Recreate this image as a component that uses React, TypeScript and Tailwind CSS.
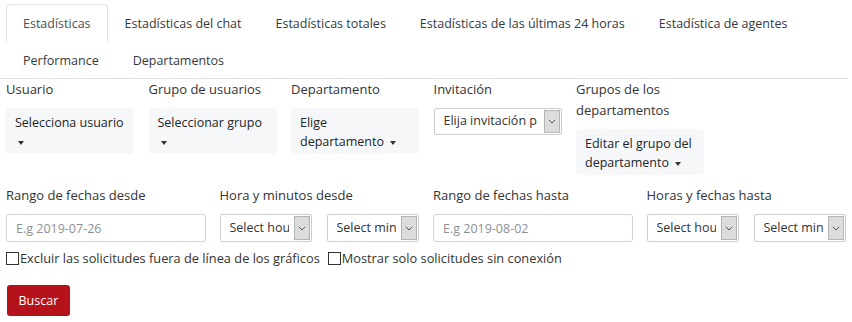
import React from "react";

const tabsRow = [
  "Estadísticas",
  "Estadísticas del chat",
  "Estadísticas totales",
  "Estadísticas de las últimas 24 horas",
  "Estadística de agentes",
  "Performance",
  "Departamentos",
];

function Caret() {
  return (
    <span className="inline-block ml-[3px] align-middle w-0 h-0 border-l-[3.5px] border-r-[3.5px] border-t-[4px] border-l-transparent border-r-transparent border-t-[#333]" />
  );
}

function DropBtn({ text }: { text: string }) {
  return (
    <div className="w-[128px] bg-[#f6f7f9] rounded-[3px] px-[9px] pt-[5px] pb-[3px] text-[12.5px] leading-[19px] text-[#212529]">
      {text} <Caret />
    </div>
  );
}

function Chevron() {
  return (
    <svg width="8" height="5" viewBox="0 0 8 5" fill="none">
      <path d="M0.8 0.8 L4 4 L7.2 0.8" stroke="#555" strokeWidth="1" />
    </svg>
  );
}

function FakeSelect({ text, w, h }: { text: string; w: string; h: string }) {
  return (
    <div className={`${w} ${h} border border-[#cdcdcd] bg-white rounded-[2px] flex items-stretch p-px`}>
      <span className="flex-1 min-w-0 pl-[8px] pr-[5px] flex items-center">
        <span className="block w-full overflow-hidden whitespace-nowrap text-[12.5px] text-[#333]">{text}</span>
      </span>
      <span className="w-[16px] bg-[#dcdcdc] border border-[#b4b4b4] flex items-center justify-center">
        <Chevron />
      </span>
    </div>
  );
}

function Label({ children }: { children: React.ReactNode }) {
  return <div className="text-[13px] leading-[21px] text-[#333] mb-[8px]">{children}</div>;
}

export default function App() {
  return (
    <div className="w-[852px] h-[322px] bg-white font-['Open_Sans',sans-serif] text-[#333] overflow-hidden">
      {/* Tabs */}
      <div className="w-[848px] border-b border-[#dee2e6] pt-[4px] pl-[6px]">
        <ul className="flex flex-wrap">
          {tabsRow.map((t, i) => (
            <li
              key={t}
              className={
                i === 0
                  ? "px-[16px] pt-[9px] pb-[7px] text-[12.5px] leading-[19px] text-[#495057] border border-[#dee2e6] border-b-white rounded-t-[4px] bg-white -mb-px"
                  : "px-[16px] pt-[9px] pb-[7px] text-[12.5px] leading-[19px] text-[#343a40] border border-transparent"
              }
            >
              {t}
            </li>
          ))}
        </ul>
      </div>

      {/* Row 1 */}
      <div className="grid grid-cols-6 w-[855px]">
        <div className="px-[6px]">
          <Label>Usuario</Label>
          <DropBtn text="Selecciona usuario" />
        </div>
        <div className="px-[6px]">
          <Label>Grupo de usuarios</Label>
          <DropBtn text="Seleccionar grupo" />
        </div>
        <div className="px-[6px]">
          <Label>Departamento</Label>
          <DropBtn text="Elige departamento" />
        </div>
        <div className="px-[6px]">
          <Label>Invitación</Label>
          <FakeSelect text="Elija invitación p" w="w-[128px]" h="h-[27px]" />
        </div>
        <div className="px-[6px]">
          <Label>
            Grupos de los
            <br />
            departamentos
          </Label>
          <DropBtn text="Editar el grupo del departamento" />
        </div>
        <div />
      </div>

      {/* Row 2 */}
      <div className="grid grid-cols-4 w-[854px] mt-[10px]">
        <div className="px-[6px]">
          <Label>Rango de fechas desde</Label>
          <input
            readOnly
            placeholder="E.g 2019-07-26"
            className="w-[200px] h-[28px] border border-[#ced4da] rounded-[3px] px-[9px] text-[12.5px] placeholder:text-[#8c9196] outline-none"
          />
        </div>
        <div className="px-[6px]">
          <Label>Hora y minutos desde</Label>
          <div className="flex gap-[15px]">
            <FakeSelect text="Select hour" w="w-[92px]" h="h-[28px]" />
            <FakeSelect text="Select minute" w="w-[92px]" h="h-[28px]" />
          </div>
        </div>
        <div className="px-[6px]">
          <Label>Rango de fechas hasta</Label>
          <input
            readOnly
            placeholder="E.g 2019-08-02"
            className="w-[200px] h-[28px] border border-[#ced4da] rounded-[3px] px-[9px] text-[12.5px] placeholder:text-[#8c9196] outline-none"
          />
        </div>
        <div className="px-[6px]">
          <Label>Horas y fechas hasta</Label>
          <div className="flex gap-[15px]">
            <FakeSelect text="Select hour" w="w-[92px]" h="h-[28px]" />
            <FakeSelect text="Select minute" w="w-[92px]" h="h-[28px]" />
          </div>
        </div>
      </div>

      {/* Checkboxes */}
      <div className="mt-[6px] pl-[6px] flex items-center text-[12.8px] leading-[21px] text-[#333]">
        <label className="flex items-center">
          <span className="inline-block w-[13px] h-[13px] border border-[#333] bg-white" />
          <span className="ml-px">Excluir las solicitudes fuera de línea de los gráficos</span>
        </label>
        <label className="flex items-center ml-[8px]">
          <span className="inline-block w-[13px] h-[13px] border border-[#333] bg-white" />
          <span className="ml-px">Mostrar solo solicitudes sin conexión</span>
        </label>
      </div>

      {/* Button */}
      <div className="mt-[16px] pl-[7px]">
        <button className="h-[31px] px-[11.5px] bg-[#b5121b] text-white text-[12.5px] leading-[19px] rounded-[3px]">
          Buscar
        </button>
      </div>
    </div>
  );
}
